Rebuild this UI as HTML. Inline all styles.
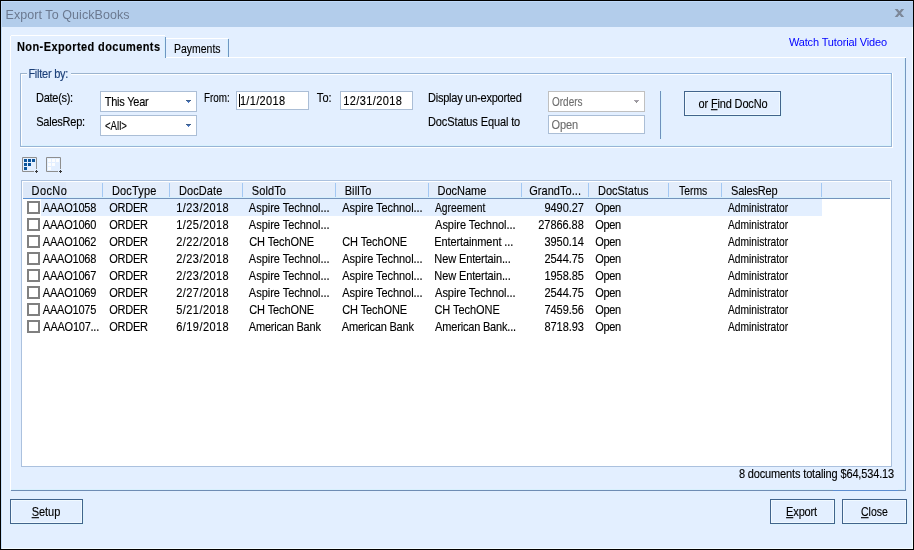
<!DOCTYPE html>
<html><head><meta charset="utf-8"><title>Export To QuickBooks</title>
<style>
html,body{margin:0;padding:0}
body{width:914px;height:550px;overflow:hidden;position:relative;background:#e3efff;font-family:"Liberation Sans",sans-serif;font-size:11px;color:#000;line-height:13px}
.a{position:absolute}
.t{position:absolute;white-space:nowrap;line-height:13px;height:13px}
.s{transform:scaleY(1.125);transform-origin:0 10px;-webkit-text-stroke:0.12px currentColor}
.frame{left:0;top:0;width:914px;height:550px;box-sizing:border-box;border:1px solid #000}
.title{left:1px;top:1px;width:912px;height:26px;background:#b3cdeb}
.btn{position:absolute;box-sizing:border-box;border:1px solid #42648c;background:#e3efff;box-shadow:inset 0 0 0 1px #f0f9ff,1px 1px 0 0 #dcf3fe}
.inp{position:absolute;box-sizing:border-box;border:1px solid #abbed6;background:#fff}
.cb{position:absolute;box-sizing:border-box;width:13px;height:13px;border:2px solid #808080;background:#fff}
.hs{position:absolute;top:183px;width:1px;height:14px;background:#a3c8f3}
u{text-decoration:underline;text-decoration-thickness:1px;text-underline-offset:1px;text-decoration-skip-ink:none}
</style></head><body><div id="w" style="position:absolute;left:0;top:0;width:914px;height:550px;will-change:transform">

<div class="a title"></div>
<div class="a" style="left:1px;top:1px;width:912px;height:1px;background:#c0dafa"></div>
<div class="a" style="left:1px;top:1px;width:1px;height:26px;background:#c0dafa"></div>
<div class="a" style="left:1px;top:27px;width:1px;height:522px;background:#c5dffb"></div>
<div class="a" style="left:2px;top:27px;width:1px;height:521px;background:#e8f1fd"></div>
<div class="a" style="left:912px;top:27px;width:1px;height:522px;background:#eefcff"></div>
<div class="a" style="left:2px;top:548px;width:911px;height:1px;background:#f4fbff"></div>
<div class="t" style="left:5.48px;top:7px;letter-spacing:0.074px;font-size:12.5px;line-height:16px;height:16px;color:#6b7990">Export To QuickBooks</div>
<svg class="a" style="left:894px;top:8px" width="11" height="10" viewBox="0 0 11 10"><path d="M0.7 0.9 H3.6 L10.2 9.1 H7.3 Z M7.3 0.9 H10.2 L3.6 9.1 H0.7 Z" fill="#7d8899"/></svg>
<div class="a" style="left:10px;top:57px;width:896px;height:1px;background:#fff"></div>
<div class="a" style="left:10px;top:36px;width:1px;height:454px;background:#fff"></div>
<div class="a" style="left:904px;top:58px;width:1px;height:432px;background:#d8f0fd"></div>
<div class="a" style="left:905px;top:58px;width:1px;height:433px;background:#7596c0"></div>
<div class="a" style="left:11px;top:489px;width:822px;height:1px;background:#d8f0fd"></div>
<div class="a" style="left:898px;top:489px;width:7px;height:1px;background:#d8f0fd"></div>
<div class="a" style="left:11px;top:490px;width:895px;height:1px;background:#6e8cb4"></div>
<div class="a" style="left:833px;top:490px;width:65px;height:1px;background:#5b8cd0"></div>
<div class="a" style="left:11px;top:36px;width:154px;height:22px;background:#e3efff"></div>
<div class="a" style="left:11px;top:35px;width:154px;height:1px;background:#fff"></div>
<div class="a" style="left:164px;top:37px;width:1px;height:21px;background:#d8f0fd"></div>
<div class="a" style="left:165px;top:37px;width:1px;height:21px;background:#6e96c3"></div>
<div class="t s" style="left:16.97px;top:41px;letter-spacing:0.411px;font-weight:bold">Non-Exported documents</div>
<div class="a" style="left:166px;top:38px;width:62px;height:1px;background:#fff"></div>
<div class="a" style="left:227px;top:39px;width:1px;height:18px;background:#d8f0fd"></div>
<div class="a" style="left:228px;top:39px;width:1px;height:18px;background:#6e96c3"></div>
<div class="t s" style="left:173.88px;top:43px;transform:scale(0.9510,1.125);">Payments</div>
<div class="t" style="left:788.88px;top:36px;letter-spacing:-0.142px;color:#0000ff;transform:scaleY(1.06);transform-origin:0 10px">Watch Tutorial Video</div>
<div class="a" style="left:20px;top:73px;width:872px;height:74px;box-sizing:border-box;border:1px solid #98b4d6;border-top:none"></div>
<div class="a" style="left:20px;top:73px;width:872px;height:1px;background:linear-gradient(to right,#9db4cd,#8db3e0)"></div>
<div class="a" style="left:21px;top:74px;width:870px;height:72px;box-sizing:border-box;border-left:1px solid #fff;border-top:1px solid #fff;border-right:1px solid #d8f2fe;border-bottom:1px solid #d8f2fe"></div>
<div class="a" style="left:20px;top:147px;width:873px;height:1px;background:#fff"></div>
<div class="a" style="left:892px;top:73px;width:1px;height:75px;background:#fff"></div>
<div class="a" style="left:27px;top:70px;width:44px;height:8px;background:#e3efff"></div>
<div class="t s" style="left:28.40px;top:68px;letter-spacing:-0.250px;color:#1b3f78">Filter by:</div>
<div class="t s" style="left:36.10px;top:92px;letter-spacing:-0.291px;">Date(s):</div>
<div class="t s" style="left:36.26px;top:116px;letter-spacing:-0.241px;">SalesRep:</div>
<div class="t s" style="left:204.11px;top:92px;transform:scale(0.8991,1.125);">From:</div>
<div class="t s" style="left:316.83px;top:92px;letter-spacing:0.087px;">To:</div>
<div class="t s" style="left:428.00px;top:92px;letter-spacing:-0.224px;">Display un-exported</div>
<div class="t s" style="left:428.02px;top:116px;letter-spacing:-0.115px;">DocStatus Equal to</div>
<div class="inp" style="left:100px;top:91px;width:97px;height:21px;border-color:#abbed6"></div>
<div class="t s" style="left:104.63px;top:96px;letter-spacing:-0.214px;color:#000">This Year</div>
<div class="a" style="left:186px;top:100px;width:5px;height:1px;background:#3f5f8a"></div>
<div class="a" style="left:187px;top:101px;width:3px;height:1px;background:#4872b8"></div>
<div class="a" style="left:188px;top:102px;width:1px;height:1px;background:#4a78c8"></div>
<div class="inp" style="left:100px;top:115px;width:97px;height:21px;border-color:#abbed6"></div>
<div class="t s" style="left:104.83px;top:120px;transform:scale(0.8742,1.125);color:#000">&lt;All&gt;</div>
<div class="a" style="left:186px;top:124px;width:5px;height:1px;background:#3f5f8a"></div>
<div class="a" style="left:187px;top:125px;width:3px;height:1px;background:#4872b8"></div>
<div class="a" style="left:188px;top:126px;width:1px;height:1px;background:#4a78c8"></div>
<div class="inp" style="left:548px;top:91px;width:97px;height:21px;border-color:#c0c0c0"></div>
<div class="t s" style="left:552.21px;top:96px;transform:scale(0.9078,1.125);color:#6e6e6e">Orders</div>
<div class="a" style="left:634px;top:100px;width:5px;height:1px;background:#a8a2ac"></div>
<div class="a" style="left:635px;top:101px;width:3px;height:1px;background:#9a989c"></div>
<div class="a" style="left:636px;top:102px;width:1px;height:1px;background:#8e8e8e"></div>
<div class="inp" style="left:236px;top:91px;width:73px;height:19px"></div>
<div class="t s" style="left:239.88px;top:95px;letter-spacing:0.335px;color:#000">1/1/2018</div>
<div class="a" style="left:239px;top:94px;width:1px;height:13px;background:#000"></div>
<div class="inp" style="left:340px;top:91px;width:73px;height:19px"></div>
<div class="t s" style="left:343.25px;top:95px;letter-spacing:0.390px;color:#000">12/31/2018</div>
<div class="inp" style="left:548px;top:115px;width:97px;height:19px"></div>
<div class="t s" style="left:551.38px;top:119px;letter-spacing:-0.030px;color:#6e6e6e">Open</div>
<div class="a" style="left:660px;top:91px;width:1px;height:48px;background:#6e90bc"></div>
<div class="a" style="left:661px;top:91px;width:1px;height:48px;background:#d8f2fe"></div>
<div class="btn" style="left:684px;top:91px;width:97px;height:25px"></div>
<div class="t s" style="left:698.57px;top:98px;letter-spacing:-0.159px;">or <u>F</u>ind DocNo</div>
<svg class="a" style="left:22px;top:157px" width="17" height="17" viewBox="0 0 17 17"><path d="M14.5 12 V0.5 H0.5 V14.5 H12" fill="none" stroke="#8e8e8e"/><rect x="2" y="2" width="3" height="3" fill="#0a539a"/><rect x="6" y="2" width="3" height="3" fill="#0a539a"/><rect x="10" y="2" width="3" height="3" fill="#0a539a"/><rect x="2" y="6" width="3" height="3" fill="#0a539a"/><rect x="6" y="6" width="3" height="3" fill="#0a539a"/><rect x="2" y="10" width="3" height="3" fill="#0a539a"/><path d="M14.5 13 V16 M13 14.5 H16" stroke="#3a3a3a" stroke-width="1"/></svg>
<svg class="a" style="left:46px;top:157px" width="17" height="17" viewBox="0 0 17 17"><path d="M14.5 12 V0.5 H0.5 V14.5 H12" fill="none" stroke="#8e8e8e"/><rect x="2" y="2" width="3" height="3" fill="#fcfdfe"/><rect x="6" y="2" width="3" height="3" fill="#fcfdfe"/><rect x="10" y="2" width="3" height="3" fill="#fcfdfe"/><rect x="2" y="6" width="3" height="3" fill="#fcfdfe"/><rect x="6" y="6" width="3" height="3" fill="#fcfdfe"/><rect x="2" y="10" width="3" height="3" fill="#fcfdfe"/><path d="M14.5 13 V16 M13 14.5 H16" stroke="#3a3a3a" stroke-width="1"/></svg>
<div class="a" style="left:21px;top:180px;width:871px;height:287px;box-sizing:border-box;border:1px solid #abc1de;background:#fff"></div>
<div class="a" style="left:23px;top:182px;width:867px;height:16px;background:#e3edfb"></div>
<div class="a" style="left:23px;top:182px;width:43px;height:16px;background:#dde8f8"></div>
<div class="a" style="left:66px;top:197px;width:824px;height:1px;background:#d6f0fd"></div>
<div class="a" style="left:23px;top:198px;width:867px;height:1px;background:#7593bb"></div>
<div class="a" style="left:23px;top:198px;width:43px;height:1px;background:#5b90d0"></div>
<div class="hs" style="left:102px"></div>
<div class="hs" style="left:169px"></div>
<div class="hs" style="left:242px"></div>
<div class="hs" style="left:335px"></div>
<div class="hs" style="left:428px"></div>
<div class="hs" style="left:521px"></div>
<div class="hs" style="left:588px"></div>
<div class="hs" style="left:668px"></div>
<div class="hs" style="left:721px"></div>
<div class="hs" style="left:821px"></div>
<div class="t s" style="left:31.58px;top:185px;letter-spacing:0.392px;">DocNo</div>
<div class="t s" style="left:111.98px;top:185px;letter-spacing:0.159px;">DocType</div>
<div class="t s" style="left:179.07px;top:185px;letter-spacing:0.065px;">DocDate</div>
<div class="t s" style="left:251.72px;top:185px;letter-spacing:0.120px;">SoldTo</div>
<div class="t s" style="left:344.67px;top:185px;letter-spacing:0.104px;">BillTo</div>
<div class="t s" style="left:437.47px;top:185px;letter-spacing:0.002px;">DocName</div>
<div class="t s" style="left:529.29px;top:185px;letter-spacing:0.034px;">GrandTo...</div>
<div class="t s" style="left:597.96px;top:185px;letter-spacing:-0.017px;">DocStatus</div>
<div class="t s" style="left:679.16px;top:185px;transform:scale(0.9449,1.125);">Terms</div>
<div class="t s" style="left:731.04px;top:185px;letter-spacing:-0.151px;">SalesRep</div>
<div class="a" style="left:41px;top:199px;width:781px;height:17px;background:#e3efff"></div>
<div class="cb" style="left:27px;top:201px"></div>
<div class="t s" style="left:42.83px;top:202px;letter-spacing:-0.211px;">AAAO1058</div>
<div class="t s" style="left:109.30px;top:202px;letter-spacing:-0.272px;">ORDER</div>
<div class="t s" style="left:176.29px;top:202px;letter-spacing:0.427px;">1/23/2018</div>
<div class="t s" style="left:248.87px;top:202px;letter-spacing:-0.025px;">Aspire Technol...</div>
<div class="t s" style="left:342.33px;top:202px;letter-spacing:-0.050px;">Aspire Technol...</div>
<div class="t s" style="left:434.74px;top:202px;transform:scale(0.9367,1.125);">Agreement</div>
<div class="t s" style="right:330.24px;top:202px;letter-spacing:-0.074px;">9490.27</div>
<div class="t s" style="left:595.27px;top:202px;letter-spacing:-0.378px;">Open</div>
<div class="t s" style="left:727.75px;top:202px;transform:scale(0.9289,1.125);">Administrator</div>
<div class="cb" style="left:27px;top:218px"></div>
<div class="t s" style="left:42.83px;top:219px;letter-spacing:-0.211px;">AAAO1060</div>
<div class="t s" style="left:109.30px;top:219px;letter-spacing:-0.272px;">ORDER</div>
<div class="t s" style="left:176.29px;top:219px;letter-spacing:0.427px;">1/25/2018</div>
<div class="t s" style="left:248.87px;top:219px;letter-spacing:-0.025px;">Aspire Technol...</div>
<div class="t s" style="left:435.11px;top:219px;letter-spacing:-0.046px;">Aspire Technol...</div>
<div class="t s" style="right:330.22px;top:219px;letter-spacing:-0.045px;">27866.88</div>
<div class="t s" style="left:595.27px;top:219px;letter-spacing:-0.378px;">Open</div>
<div class="t s" style="left:727.75px;top:219px;transform:scale(0.9289,1.125);">Administrator</div>
<div class="cb" style="left:27px;top:235px"></div>
<div class="t s" style="left:42.83px;top:236px;letter-spacing:-0.211px;">AAAO1062</div>
<div class="t s" style="left:109.30px;top:236px;letter-spacing:-0.272px;">ORDER</div>
<div class="t s" style="left:176.29px;top:236px;letter-spacing:0.427px;">2/22/2018</div>
<div class="t s" style="left:249.15px;top:236px;letter-spacing:-0.084px;">CH TechONE</div>
<div class="t s" style="left:342.15px;top:236px;letter-spacing:-0.084px;">CH TechONE</div>
<div class="t s" style="left:434.35px;top:236px;letter-spacing:-0.116px;">Entertainment ...</div>
<div class="t s" style="right:330.24px;top:236px;letter-spacing:-0.074px;">3950.14</div>
<div class="t s" style="left:595.27px;top:236px;letter-spacing:-0.378px;">Open</div>
<div class="t s" style="left:727.75px;top:236px;transform:scale(0.9289,1.125);">Administrator</div>
<div class="cb" style="left:27px;top:252px"></div>
<div class="t s" style="left:42.83px;top:253px;letter-spacing:-0.211px;">AAAO1068</div>
<div class="t s" style="left:109.30px;top:253px;letter-spacing:-0.272px;">ORDER</div>
<div class="t s" style="left:176.29px;top:253px;letter-spacing:0.427px;">2/23/2018</div>
<div class="t s" style="left:248.87px;top:253px;letter-spacing:-0.025px;">Aspire Technol...</div>
<div class="t s" style="left:342.33px;top:253px;letter-spacing:-0.050px;">Aspire Technol...</div>
<div class="t s" style="left:434.34px;top:253px;letter-spacing:-0.117px;">New Entertain...</div>
<div class="t s" style="right:330.24px;top:253px;letter-spacing:-0.074px;">2544.75</div>
<div class="t s" style="left:595.27px;top:253px;letter-spacing:-0.378px;">Open</div>
<div class="t s" style="left:727.75px;top:253px;transform:scale(0.9289,1.125);">Administrator</div>
<div class="cb" style="left:27px;top:269px"></div>
<div class="t s" style="left:42.83px;top:270px;letter-spacing:-0.211px;">AAAO1067</div>
<div class="t s" style="left:109.30px;top:270px;letter-spacing:-0.272px;">ORDER</div>
<div class="t s" style="left:176.29px;top:270px;letter-spacing:0.427px;">2/23/2018</div>
<div class="t s" style="left:248.87px;top:270px;letter-spacing:-0.025px;">Aspire Technol...</div>
<div class="t s" style="left:342.33px;top:270px;letter-spacing:-0.050px;">Aspire Technol...</div>
<div class="t s" style="left:434.34px;top:270px;letter-spacing:-0.117px;">New Entertain...</div>
<div class="t s" style="right:330.24px;top:270px;letter-spacing:-0.074px;">1958.85</div>
<div class="t s" style="left:595.27px;top:270px;letter-spacing:-0.378px;">Open</div>
<div class="t s" style="left:727.75px;top:270px;transform:scale(0.9289,1.125);">Administrator</div>
<div class="cb" style="left:27px;top:286px"></div>
<div class="t s" style="left:42.83px;top:287px;letter-spacing:-0.211px;">AAAO1069</div>
<div class="t s" style="left:109.30px;top:287px;letter-spacing:-0.272px;">ORDER</div>
<div class="t s" style="left:176.29px;top:287px;letter-spacing:0.427px;">2/27/2018</div>
<div class="t s" style="left:248.87px;top:287px;letter-spacing:-0.025px;">Aspire Technol...</div>
<div class="t s" style="left:342.33px;top:287px;letter-spacing:-0.050px;">Aspire Technol...</div>
<div class="t s" style="left:435.11px;top:287px;letter-spacing:-0.046px;">Aspire Technol...</div>
<div class="t s" style="right:330.24px;top:287px;letter-spacing:-0.074px;">2544.75</div>
<div class="t s" style="left:595.27px;top:287px;letter-spacing:-0.378px;">Open</div>
<div class="t s" style="left:727.75px;top:287px;transform:scale(0.9289,1.125);">Administrator</div>
<div class="cb" style="left:27px;top:303px"></div>
<div class="t s" style="left:42.83px;top:304px;letter-spacing:-0.211px;">AAAO1075</div>
<div class="t s" style="left:109.30px;top:304px;letter-spacing:-0.272px;">ORDER</div>
<div class="t s" style="left:176.29px;top:304px;letter-spacing:0.427px;">5/21/2018</div>
<div class="t s" style="left:249.15px;top:304px;letter-spacing:-0.084px;">CH TechONE</div>
<div class="t s" style="left:342.15px;top:304px;letter-spacing:-0.084px;">CH TechONE</div>
<div class="t s" style="left:434.47px;top:304px;letter-spacing:-0.054px;">CH TechONE</div>
<div class="t s" style="right:330.24px;top:304px;letter-spacing:-0.074px;">7459.56</div>
<div class="t s" style="left:595.27px;top:304px;letter-spacing:-0.378px;">Open</div>
<div class="t s" style="left:727.75px;top:304px;transform:scale(0.9289,1.125);">Administrator</div>
<div class="cb" style="left:27px;top:320px"></div>
<div class="t s" style="left:43.30px;top:321px;letter-spacing:-0.244px;">AAAO107...</div>
<div class="t s" style="left:109.30px;top:321px;letter-spacing:-0.272px;">ORDER</div>
<div class="t s" style="left:176.29px;top:321px;letter-spacing:0.427px;">6/19/2018</div>
<div class="t s" style="left:248.80px;top:321px;letter-spacing:-0.209px;">American Bank</div>
<div class="t s" style="left:341.80px;top:321px;letter-spacing:-0.209px;">American Bank</div>
<div class="t s" style="left:435.11px;top:321px;letter-spacing:-0.185px;">American Bank...</div>
<div class="t s" style="right:330.24px;top:321px;letter-spacing:-0.074px;">8718.93</div>
<div class="t s" style="left:595.27px;top:321px;letter-spacing:-0.378px;">Open</div>
<div class="t s" style="left:727.75px;top:321px;transform:scale(0.9289,1.125);">Administrator</div>
<div class="t s" style="right:19.98px;top:468px;letter-spacing:-0.146px;">8 documents totaling $64,534.13</div>
<div class="btn" style="left:10px;top:499px;width:73px;height:25px"></div>
<div class="t s" style="left:31.64px;top:506px;letter-spacing:-0.009px;"><u>S</u>etup</div>
<div class="btn" style="left:770px;top:499px;width:65px;height:25px"></div>
<div class="t s" style="left:786.11px;top:506px;letter-spacing:-0.162px;"><u>E</u>xport</div>
<div class="btn" style="left:842px;top:499px;width:65px;height:25px"></div>
<div class="t s" style="left:860.91px;top:506px;transform:scale(0.9549,1.125);"><u>C</u>lose</div>
<div class="a frame"></div>
</div></body></html>
